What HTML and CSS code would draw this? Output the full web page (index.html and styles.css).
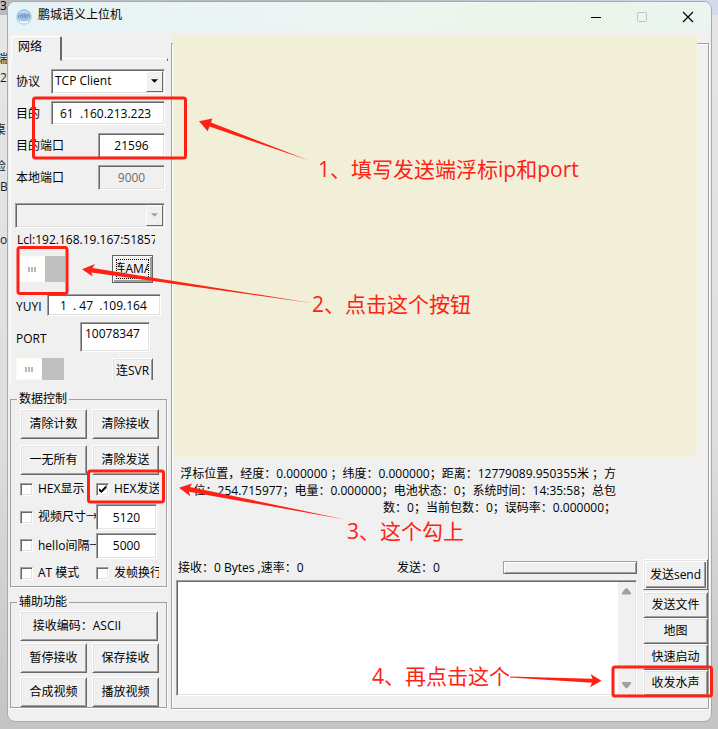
FILE: index.html
```html
<!DOCTYPE html>
<html lang="zh-CN">
<head>
<meta charset="utf-8">
<title>鹏城语义上位机</title>
<link rel="stylesheet" href="styles.css">
</head>
<body>
<div class="backdrop" aria-hidden="true">
  <div class="backdrop-bar">3</div>
  <span class="frag frag-a">端</span>
  <span class="frag frag-b">2</span>
  <span class="frag frag-c">桌</span>
  <span class="frag frag-d">检</span>
  <span class="frag frag-e">B</span>
  <span class="frag frag-f">ox</span>
</div>

<div class="window">
  <header class="titlebar">
    <svg class="app-icon" viewBox="0 0 16 16" aria-hidden="true">
      <defs>
        <radialGradient id="orb" cx=".5" cy=".35" r=".65">
          <stop offset="0" stop-color="#8fb6dc"/>
          <stop offset=".6" stop-color="#a3c4e4"/>
          <stop offset="1" stop-color="#d3e2f2"/>
        </radialGradient>
      </defs>
      <circle cx="8" cy="8" r="7.5" fill="url(#orb)" stroke="#b4c9df" stroke-width=".6"/>
      <path d="M2.500 6v3M4.500 6h2v3M4.500 6v3M8 9V6h1.500v3M11 9V6h2.500v3" stroke="#5f93c8" stroke-width=".8" fill="none"/>
      <path d="M4 12.500q4 2 8 0" stroke="#fff" stroke-width="1.500" fill="none"/>
      <path d="M4 3.500q4-2 8 0" stroke="#e9f3fb" stroke-width="1" fill="none"/>
    </svg>
    <h1 class="title">鹏城语义上位机</h1>
    <div class="caption-buttons">
      <button class="caption" aria-label="最小化"><svg viewBox="0 0 12 12"><path d="M1 6.500h10" stroke="#000"/></svg></button>
      <button class="caption" aria-label="最大化" disabled><svg viewBox="0 0 12 12"><rect x="1.500" y="1.500" width="9" height="9" rx="1" fill="none" stroke="#bcc5bd"/></svg></button>
      <button class="caption" aria-label="关闭"><svg viewBox="0 0 12 12"><path d="M1 1l10 10M11 1L1 11" stroke="#000" stroke-width="1.200"/></svg></button>
    </div>
  </header>

  <div class="client">
    <aside class="side">
      <div class="tabs"><button class="tab">网络</button><span class="tab-line"></span></div>

      <div class="network">
        <div class="row">
          <label for="proto">协议</label>
          <span class="combo combo-wide">
            <select id="proto"><option>TCP Client</option></select>
            <span class="combo-arrow"><svg viewBox="0 0 8 4"><path d="M0 0h8L4 4z"/></svg></span>
          </span>
        </div>
        <div class="row">
          <label for="dest">目的</label>
          <input id="dest" class="field field-wide" value="61&nbsp;&nbsp;.160.213.223">
        </div>
        <div class="row">
          <label for="dport">目的端口</label>
          <input id="dport" class="field field-port" value="21596">
        </div>
        <div class="row">
          <label for="lport">本地端口</label>
          <input id="lport" class="field field-port" value="9000" disabled>
        </div>
        <div class="row row-device">
          <span class="combo combo-full">
            <select aria-label="设备" disabled><option></option></select>
            <span class="combo-arrow off"><svg viewBox="0 0 8 4"><path d="M0 0h8L4 4z"/></svg></span>
          </span>
        </div>
        <div class="local">Lcl:192.168.19.167:51857</div>
        <div class="row row-connect">
          <button class="toggle toggle-tall" aria-label="连接开关"><span class="thumb"><i></i><i></i><i></i></span></button>
          <button class="btn btn-link default"><span>连AMA</span></button>
        </div>
        <div class="row row-yuyi">
          <label for="yuyi">YUYI</label>
          <input id="yuyi" class="field field-wide" value="1&nbsp;&nbsp;.&nbsp;47&nbsp;&nbsp;.109.164">
        </div>
        <div class="row row-code">
          <label for="code">PORT</label>
          <input id="code" class="field field-code" value="10078347">
        </div>
        <div class="row row-connect row-server">
          <button class="toggle" aria-label="服务器开关"><span class="thumb"><i></i><i></i><i></i></span></button>
          <button class="btn btn-link flat"><span>连SVR</span></button>
        </div>
      </div>

      <fieldset class="group group-data">
        <legend>数据控制</legend>
        <div class="pair pair-loose">
          <button class="btn">清除计数</button><button class="btn">清除接收</button>
          <button class="btn">一无所有</button><button class="btn">清除发送</button>
        </div>
        <div class="options">
          <label class="check clip"><input type="checkbox">HEX显示</label>
          <label class="check"><input type="checkbox" checked>HEX发送</label>
          <label class="check"><input type="checkbox">视频尺寸→</label>
          <input class="field field-num" aria-label="视频尺寸" value="5120">
          <label class="check"><input type="checkbox">hello间隔→</label>
          <input class="field field-num" aria-label="hello间隔" value="5000">
          <label class="check"><input type="checkbox">AT 模式</label>
          <label class="check"><input type="checkbox">发帧换行</label>
        </div>
      </fieldset>

      <fieldset class="group group-aux">
        <legend>辅助功能</legend>
        <div class="pair">
          <button class="btn btn-encoding">接收编码：ASCII</button>
          <button class="btn">暂停接收</button><button class="btn">保存接收</button>
        </div>
        <div class="pair pair-last">
          <button class="btn">合成视频</button><button class="btn">播放视频</button>
        </div>
      </fieldset>
    </aside>

    <main class="main">
      <div class="canvas"></div>
      <p class="status">浮标位置，经度：0.000000&nbsp;；纬度：0.000000；距离：12779089.950355米&nbsp;；方<br>位：254.715977；电量：0.000000；电池状态：0；系统时间：14:35:58；总包<br>数：0；当前包数：0；误码率：0.000000；</p>
      <div class="lower">
        <div class="transfer">
          <div class="counters">
            <span class="received">接收：0 Bytes ,速率：0</span>
            <span class="sent">发送：0</span>
            <span class="progress" role="progressbar" aria-label="发送进度"></span>
          </div>
          <div class="message">
            <textarea aria-label="发送内容"></textarea>
            <span class="scrollbar">
              <svg viewBox="0 0 9 7"><path d="M4.500 0q1 0 4.500 5v1.500H0V5q3.500-5 4.500-5z"/></svg>
              <svg viewBox="0 0 9 7"><path d="M0 0h9v1.500Q5.500 6.500 4.500 6.500T0 1.500z"/></svg>
            </span>
          </div>
        </div>
        <div class="actions">
          <button class="btn send">发送send</button>
          <button class="btn">发送文件</button>
          <button class="btn">地图</button>
          <button class="btn">快速启动</button>
          <button class="btn">收发水声</button>
        </div>
      </div>
    </main>
  </div>
</div>

<div class="notes">
  <svg class="marks" viewBox="0 0 718 729" aria-hidden="true">
    <g fill="none" stroke="#ff2114" stroke-width="3">
      <rect x="33.500" y="98" width="152" height="60" rx="2"/>
      <rect x="18" y="247.500" width="49" height="46" rx="2"/>
      <rect x="88.500" y="471" width="75" height="31" rx="2"/>
      <rect x="613" y="667" width="98.500" height="29" rx="2"/>
    </g>
    <g fill="#ff2114">
      <path d="M199 121.300L212.300 118.500L211 122.500L308.500 160.300L209.500 126.500L207.700 131.300z"/>
      <path d="M82 269.300L95 264L92.500 268L313 303.300L91.500 272.500L92.500 276.500z"/>
      <path d="M179 487.700L192 483.500L190 487L345 519.500L189 491.700L190.300 496.300z"/>
      <path d="M601.500 680.700L590.500 674L592.500 678.700L510 676.500V677.500L592 682.700L590 687.300z"/>
    </g>
  </svg>
  <span class="note note-1">1、填写发送端浮标ip和port</span>
  <span class="note note-2">2、点击这个按钮</span>
  <span class="note note-3">3、这个勾上</span>
  <span class="note note-4">4、再点击这个</span>
</div>
</body>
</html>
```

FILE: styles.css
```css
* { box-sizing: border-box; }

:root {
  --face: #f0f0f0;
  --light: #e3e3e3;
  --mid: #a0a0a0;
  --dark: #696969;
}

body {
  margin: 0;
  min-height: 100vh;
  padding: 1px 6px 7px 7px;
  display: flex;
  overflow: hidden;
  position: relative;
  background: linear-gradient(#e6e6e6 0, #dedede 60%, #c4c4c4 100%);
  color: #000;
  font: 12px/16px "Open Sans", "Noto Sans CJK SC", sans-serif;
}

button, input, select, textarea {
  font: inherit;
  color: inherit;
  margin: 0;
  border-radius: 0;
}

/* Page visible behind the window */
.backdrop { position: absolute; inset: 0; overflow: hidden; }
.backdrop-bar { height: 15px; background: linear-gradient(90deg, #b9b9bf 0, #b9b9bf 50%, #d8d8f0 100%); line-height: 12px; }
.frag { position: absolute; color: #222; }
.frag-a { left: -4px; top: 51px; }
.frag-b { left: 0; top: 70px; }
.frag-c { left: -6px; top: 122px; }
.frag-d { left: -6px; top: 159px; }
.frag-e { left: 0; top: 179px; }
.frag-f { left: 0; top: 232px; }

.window {
  flex: 1;
  display: flex;
  flex-direction: column;
  position: relative;
  border: 1px solid #a9a9ae;
  border-radius: 8px;
  background: var(--face);
  overflow: hidden;
}

.titlebar {
  height: 29px;
  display: flex;
  align-items: center;
  padding-left: 8px;
  background: linear-gradient(90deg, #e6f3f7 0, #edf5f1 50%, #ecf5e9 75%, #eaf5f0 100%);
}
.app-icon { width: 16px; height: 16px; margin-right: 6px; }
.title { flex: 1; margin: 0; font-size: 12px; line-height: 24px; height: 28px; font-weight: 400; }
.caption-buttons { display: flex; }
.caption { width: 46px; height: 28px; padding: 0; border: 0; background: none; display: grid; place-items: center; }
.caption svg { width: 12px; height: 12px; }

.client { flex: 1; display: grid; grid-template-columns: 160px 1fr; column-gap: 3px; padding: 4px 2px 12px 0; }

/* Shared bevels */
.btn {
  border: 1px solid;
  border-color: #fff var(--dark) var(--dark) #fff;
  box-shadow: inset 1px 1px var(--light), inset -1px -1px var(--mid);
  background: var(--face);
  height: 30px;
  padding: 0;
  text-align: center;
  white-space: nowrap;
  overflow: hidden;
}
.field, .combo, .message {
  border: 1px solid;
  border-color: var(--mid) #fff #fff var(--mid);
  box-shadow: inset 1px 1px var(--dark), inset -1px -1px var(--light);
  background: #fff;
}
.field { height: 24px; padding: 0 5px; outline: 0; }
.field:disabled { background: var(--face); color: #6d6d6d; }

/* Network tab */
.tabs { display: flex; align-items: flex-end; height: 26px; padding-left: 3px; }
.tab {
  width: 51px;
  height: 25px;
  padding: 0 12px 4px 0;
  text-align: center;
  background: none;
  border: 1px solid;
  border-color: #fff var(--dark) transparent #fff;
  border-right-width: 2px;
  border-radius: 2px 2px 0 0;
}
.tab-line { flex: 1; height: 3px; border-top: 1px solid #fff; border-right: 1px solid var(--dark); }

.network { padding: 4px 3px 0 8px; border-left: 1px solid #fff; margin-left: 2px; }
.row { height: 32px; display: flex; align-items: center; justify-content: space-between; margin-left: -3px; }
.row label { padding-top: 2px; white-space: nowrap; }
.field-wide { width: 114px; padding-left: 8px; }
.field-port { width: 67px; text-align: center; height: 25px; }
.combo { display: flex; width: 114px; height: 25px; padding: 1px; }
.combo-full { width: 150px; background: var(--face); margin-left: -1px; }
.combo select { flex: 1; min-width: 0; appearance: none; border: 0; background: none; padding: 0 2px; outline: 0; }
.combo-arrow {
  width: 17px;
  display: grid;
  place-items: center;
  background: var(--face);
  border: 1px solid;
  border-color: #fff var(--dark) var(--dark) #fff;
}
.combo-arrow svg { width: 7px; height: 4px; }
.combo-arrow.off svg { fill: var(--mid); }
.row-device { margin-top: 6px; }
.local { width: 138px; height: 18px; line-height: 18px; margin-left: -2px; overflow: hidden; white-space: nowrap; }
.row-connect { height: 40px; padding-right: 12px; }
.btn-link { width: 41px; height: 28px; display: flex; justify-content: center; }
.default { border-color: #646464; box-shadow: inset 1px 1px #fff, inset -2px -2px var(--mid); padding: 3px; }
.default span { flex: 1; display: flex; justify-content: center; overflow: hidden; height: 20px; align-items: center; border: 1px dotted #000; }
.toggle { display: flex; width: 48px; height: 22px; padding: 0; border: 0; background: #c0c0c0; }
.toggle-tall { height: 26px; margin-left: 3px; width: 46px; }
.thumb { width: 26px; height: 100%; background: #fff; border: 1px solid #fffaf0; display: flex; justify-content: center; align-items: center; gap: 1px; }
.thumb i { width: 2px; height: 5px; background: #b8b8b8; }
.row-yuyi { padding-right: 4px; }
.row-yuyi .field { height: 22px; padding-left: 12px; }
.row-yuyi label, .row-code label { padding-top: 4px; }
.row-code { padding-right: 15px; }
.field-code { width: 70px; height: 30px; padding: 0 4px 7px; }
.row-server { height: 32px; }
.flat { height: 22px; padding-top: 3px; border-bottom: 0; box-shadow: inset 1px 1px var(--light), inset -1px 0 var(--mid); align-items: center; }

/* Group boxes */
.group {
  min-width: 0;
  margin: 6px 1px 0 2px;
  padding: 2px 7px 0 9px;
  border: 1px solid var(--mid);
  box-shadow: 1px 1px #fff;
}
.group legend { margin-left: -3px; padding: 0 2px; }
.group-aux { margin-top: 7px; padding-top: 1px; }
.pair { display: grid; grid-template-columns: 1fr 1fr; gap: 2px 5px; }
.pair-loose { row-gap: 6px; }
.pair-last { margin-top: 4px; }
.btn-encoding { grid-column: 1 / -1; padding-right: 24px; margin-right: 1px; }

.options { display: grid; grid-template-columns: 76px 1fr; grid-template-rows: 28px 28px 29px 26px; align-items: center; }
.check { display: flex; align-items: center; gap: 5px; white-space: nowrap; overflow: hidden; }
.check.clip { margin-right: 9px; }
.check input {
  appearance: none;
  flex: none;
  width: 13px;
  height: 13px;
  border: 1px solid;
  border-color: var(--mid) #fff #fff var(--mid);
  box-shadow: inset 1px 1px var(--dark), inset -1px -1px var(--light);
  background: #fff;
  display: grid;
  place-items: center;
}
.check input:checked::before {
  content: "";
  width: 8px;
  height: 8px;
  background: #000;
  clip-path: polygon(0 35%, 35% 65%, 100% 0, 100% 38%, 35% 100%, 0 70%);
}
.field-num { width: 61px; height: 26px; text-align: center; }

/* Receiving side */
.main {
  min-width: 0;
  margin-top: 8px;
  display: flex;
  flex-direction: column;
  border: 1px solid var(--mid);
  box-shadow: inset 1px 1px #fff, 1px 1px #fff;
  padding: 0 0 12px 1px;
}
.canvas { flex: 1; margin: -9px 11px 0 0; background: #f1efd7; }
.status { margin: 8px 92px 0 0; line-height: 17px; text-align: right; white-space: nowrap; }
.lower { display: grid; grid-template-columns: 1fr 65px; column-gap: 6px; margin-top: 43px; padding-left: 3px; }
.transfer { display: flex; flex-direction: column; gap: 4px; min-width: 0; }
.counters { display: flex; align-items: center; height: 17px; white-space: nowrap; }
.received { flex: 1; padding-left: 2px; }
.sent { width: 106px; }
.progress {
  width: 134px;
  height: 13px;
  border: 1px solid;
  border-color: var(--mid) var(--dark) var(--dark) var(--mid);
  box-shadow: inset 1px 1px #fff, inset -1px -1px var(--mid);
}
.message { flex: 1; display: flex; padding: 1px; }
.message textarea { flex: 1; min-width: 0; height: 100%; border: 0; padding: 2px; resize: none; background: none; outline: 0; }
.scrollbar { width: 17px; background: var(--face); display: flex; flex-direction: column; align-items: center; justify-content: space-between; padding: 6px 0 5px; }
.scrollbar svg { width: 9px; height: 7px; fill: var(--mid); }
.actions { display: flex; flex-direction: column; }
.actions .btn { height: 26px; }
.actions .send {
  height: 31px;
  margin-bottom: 2px;
  box-shadow: inset 1px 1px var(--light), inset -1px -1px var(--face), inset 2px 2px #fff, inset -2px -2px var(--dark), inset -3px -3px var(--mid);
}

/* Red call-outs drawn over the window */
.notes { position: absolute; inset: 0; pointer-events: none; color: #ff2114; }
.marks { position: absolute; left: 0; top: 0; width: 718px; height: 729px; }
.note { position: absolute; font-size: 21px; line-height: 28px; white-space: nowrap; }
.note-1 { left: 318px; top: 155px; }
.note-2 { left: 312px; top: 290px; }
.note-3 { left: 347px; top: 517px; }
.note-4 { left: 372px; top: 662px; }
```
